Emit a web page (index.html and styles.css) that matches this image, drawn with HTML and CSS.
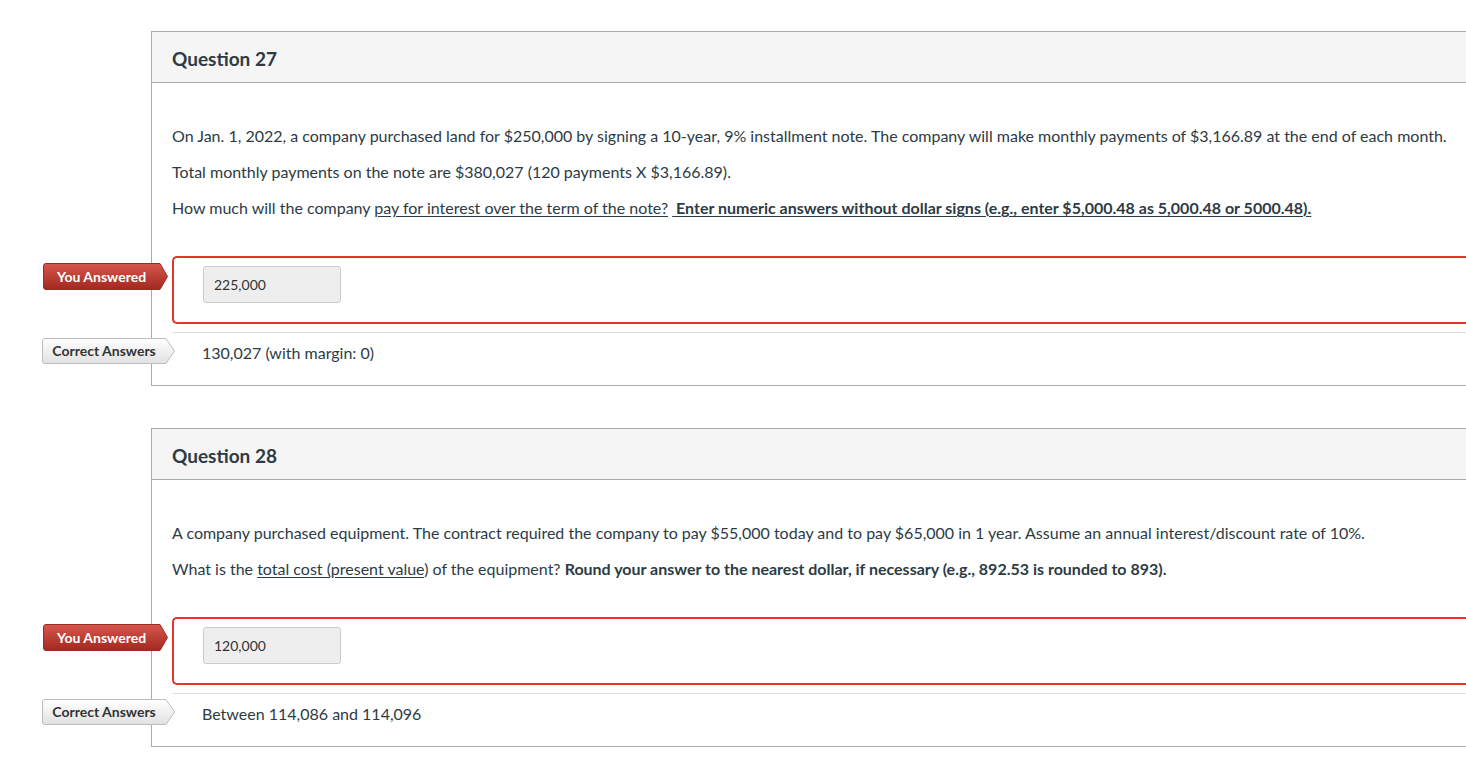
FILE: index.html
```html
<!DOCTYPE html>
<html lang="en">
<head>
<meta charset="utf-8">
<title>Quiz results</title>
<link rel="stylesheet" href="styles.css">
</head>
<body>
<main class="quiz">
  <section class="question">
    <header class="q-header"><h2 class="q-title">Question 27</h2></header>
    <div class="q-body">
      <div class="q-text">
        <p>On Jan. 1, 2022, a company purchased land for $250,000 by signing a 10-year, 9% installment note. The company will make monthly payments of $3,166.89 at the end of each month.</p>
        <p>Total monthly payments on the note are $380,027 (120 payments X $3,166.89).</p>
        <p>How much will the company <u>pay for interest over the term of the note?</u> <u><strong class="cond">&nbsp;Enter numeric answers without dollar signs (e.g., enter $5,000.48 as 5,000.48 or 5000.48).</strong></u></p>
      </div>
      <div class="answer wrong">
        <span class="tag tag-you">
          <svg class="tag-shape" viewBox="0 0 125 27" width="125" height="27" aria-hidden="true">
            <defs><linearGradient id="gr1" x1="0" y1="0" x2="0" y2="1"><stop offset="0" stop-color="#d6574e"/><stop offset="1" stop-color="#a3281f"/></linearGradient></defs>
            <path d="M3,0.5 H117 L124.5,13.5 L117,26.5 H3 Q0.5,26.5 0.5,24 V3 Q0.5,0.5 3,0.5 Z" fill="url(#gr1)" stroke="#9b2a22" stroke-width="1"/>
          </svg>
          <span class="tag-label">You Answered</span>
        </span>
        <div class="answer-input">225,000</div>
      </div>
      <div class="answer correct">
        <span class="tag tag-correct">
          <svg class="tag-shape" viewBox="0 0 133 26" width="133" height="26" aria-hidden="true">
            <defs><linearGradient id="gc1" x1="0" y1="0" x2="0" y2="1"><stop offset="0" stop-color="#ffffff"/><stop offset="1" stop-color="#e1e1e1"/></linearGradient></defs>
            <path d="M3,0.5 H124 L132.5,13 L124,25.5 H3 Q0.5,25.5 0.5,23 V3 Q0.5,0.5 3,0.5 Z" fill="url(#gc1)" stroke="#bdbdbd" stroke-width="1"/>
          </svg>
          <span class="tag-label">Correct Answers</span>
        </span>
        <span class="answer-text">130,027 (with margin: 0)</span>
      </div>
    </div>
  </section>

  <section class="question">
    <header class="q-header"><h2 class="q-title">Question 28</h2></header>
    <div class="q-body">
      <div class="q-text">
        <p>A company purchased equipment. The contract required the company to pay $55,000 today and to pay $65,000 in 1 year. Assume an annual interest/discount rate of 10%.</p>
        <p>What is the <u>total cost (present value</u>) of the equipment? <strong class="cond">Round your answer to the nearest dollar, if necessary (e.g., 892.53 is rounded to 893).</strong></p>
      </div>
      <div class="answer wrong">
        <span class="tag tag-you">
          <svg class="tag-shape" viewBox="0 0 125 27" width="125" height="27" aria-hidden="true">
            <defs><linearGradient id="gr2" x1="0" y1="0" x2="0" y2="1"><stop offset="0" stop-color="#d6574e"/><stop offset="1" stop-color="#a3281f"/></linearGradient></defs>
            <path d="M3,0.5 H117 L124.5,13.5 L117,26.5 H3 Q0.5,26.5 0.5,24 V3 Q0.5,0.5 3,0.5 Z" fill="url(#gr2)" stroke="#9b2a22" stroke-width="1"/>
          </svg>
          <span class="tag-label">You Answered</span>
        </span>
        <div class="answer-input">120,000</div>
      </div>
      <div class="answer correct">
        <span class="tag tag-correct">
          <svg class="tag-shape" viewBox="0 0 133 26" width="133" height="26" aria-hidden="true">
            <defs><linearGradient id="gc2" x1="0" y1="0" x2="0" y2="1"><stop offset="0" stop-color="#ffffff"/><stop offset="1" stop-color="#e1e1e1"/></linearGradient></defs>
            <path d="M3,0.5 H124 L132.5,13 L124,25.5 H3 Q0.5,25.5 0.5,23 V3 Q0.5,0.5 3,0.5 Z" fill="url(#gc2)" stroke="#bdbdbd" stroke-width="1"/>
          </svg>
          <span class="tag-label">Correct Answers</span>
        </span>
        <span class="answer-text">Between 114,086 and 114,096</span>
      </div>
    </div>
  </section>
</main>
</body>
</html>
```
FILE: styles.css
```css
html, body {
  margin: 0;
  padding: 0;
  background: #ffffff;
  overflow: hidden;
}
body {
  font-family: Lato, "Open Sans", "Liberation Sans", sans-serif;
  color: #2d3b45;
  font-size: 16px;
}
.quiz {
  padding: 31px 0 0 151px;
  display: flex;
  flex-direction: column;
  gap: 42px;
}
.question {
  width: 1400px;
  border: 1px solid #aaaaaa;
  border-right: none;
  flex: none;
}
.q-header {
  height: 51px;
  box-sizing: border-box;
  padding: 16px 0 0 20px;
  background: #f5f5f5;
  border-bottom: 1px solid #aaaaaa;
}
.q-title {
  margin: 0;
  font-size: 19px;
  line-height: 22px;
  font-weight: 700;
  color: #2d3b45;
}
.q-body {
  padding: 0 0 0 20px;
}
.q-text {
  padding-top: 42px;
  padding-bottom: 37px;
}
.q-text p {
  margin: 0 0 14px;
  line-height: 22px;
}
.q-text p:last-child {
  margin-bottom: 0;
}
.q-text u {
  text-underline-offset: 2px;
}
.cond {
  font-weight: 700;
}
.answer {
  position: relative;
}
.answer.wrong {
  border: 2px solid #e5352a;
  border-right: none;
  border-radius: 5px 0 0 5px;
  padding: 8px 0 19px 29px;
}
.answer-input {
  width: 138px;
  height: 37px;
  box-sizing: border-box;
  background: #eeeeee;
  border: 1px solid #cccccc;
  border-radius: 3px;
  padding: 0 10px;
  font-size: 14px;
  line-height: 35px;
  color: #333333;
}
.answer.correct {
  margin-top: 8px;
  border-top: 1px solid #dddddd;
  padding: 9px 0 21px 30px;
  line-height: 22px;
}
.answer-text {
  font-size: 16px;
}
.tag {
  position: absolute;
  display: block;
}
.tag-shape {
  position: absolute;
  left: 0;
  top: 0;
  display: block;
}
.tag-label {
  position: relative;
  display: block;
  text-align: center;
  font-size: 14px;
  font-weight: 700;
}
.tag-you {
  left: -131px;
  top: 5px;
  width: 125px;
  height: 27px;
}
.tag-you .tag-label {
  width: 117px;
  line-height: 27px;
  color: #ffffff;
}
.tag-correct {
  left: -130px;
  top: 5px;
  width: 133px;
  height: 26px;
}
.tag-correct .tag-label {
  width: 124px;
  line-height: 26px;
  color: #333333;
}
```
